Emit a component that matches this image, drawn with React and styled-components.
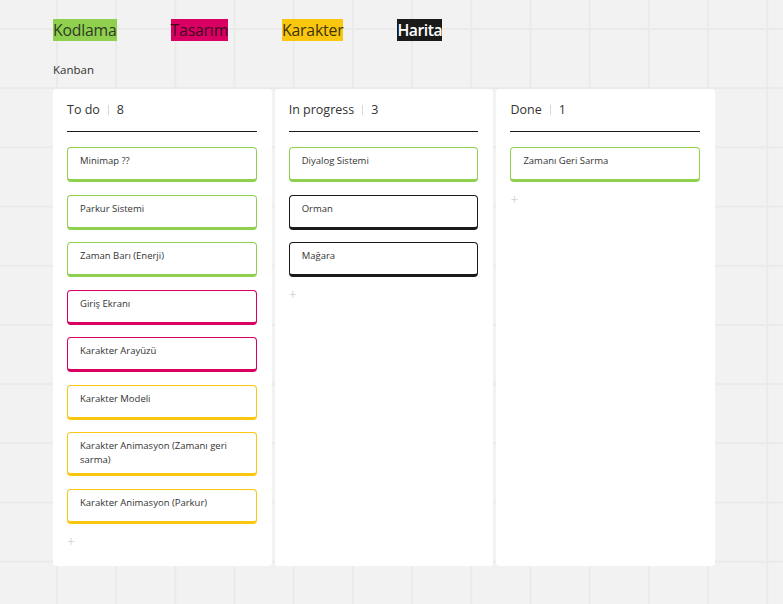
import React from 'react';
import styled, { createGlobalStyle } from 'styled-components';

const tags = [
	{ label: 'Kodlama', bg: '#8fd14f', fg: '#2f3a25' },
	{ label: 'Tasarım', bg: '#da0063', fg: '#3a0d20' },
	{ label: 'Karakter', bg: '#fac710', fg: '#3d3308' },
	{ label: 'Harita', bg: '#1a1a1a', fg: '#ffffff', bold: true },
];

const colors = {
	green: '#8fd14f',
	pink: '#da0063',
	yellow: '#fac710',
	black: '#1a1a1a',
};

const columns = [
	{
		title: 'To do',
		cards: [
			{ text: 'Minimap ??', color: 'green' },
			{ text: 'Parkur Sistemi', color: 'green' },
			{ text: 'Zaman Barı (Enerji)', color: 'green' },
			{ text: 'Giriş Ekranı', color: 'pink' },
			{ text: 'Karakter Arayüzü', color: 'pink' },
			{ text: 'Karakter Modeli', color: 'yellow' },
			{ text: 'Karakter Animasyon (Zamanı geri sarma)', color: 'yellow' },
			{ text: 'Karakter Animasyon (Parkur)', color: 'yellow' },
		],
	},
	{
		title: 'In progress',
		cards: [
			{ text: 'Diyalog Sistemi', color: 'green' },
			{ text: 'Orman', color: 'black' },
			{ text: 'Mağara', color: 'black' },
		],
	},
	{
		title: 'Done',
		cards: [{ text: 'Zamanı Geri Sarma', color: 'green' }],
	},
];

const App = () => {
	return (
		<>
			<GlobalStyle />
			<Page>
				<TagRow>
					{tags.map(tag => (
						<Tag key={tag.label} $bg={tag.bg} $fg={tag.fg} $bold={tag.bold}>
							{tag.label}
						</Tag>
					))}
				</TagRow>

				<BoardTitle>Kanban</BoardTitle>

				<Board>
					{columns.map(col => (
						<Column key={col.title}>
							<ColumnHeader>
								<span>{col.title}</span>
								<Divider />
								<span>{col.cards.length}</span>
							</ColumnHeader>

							<CardList>
								{col.cards.map(card => (
									<Card key={card.text} $color={colors[card.color]}>
										{card.text}
									</Card>
								))}
							</CardList>

							<AddButton>+</AddButton>
						</Column>
					))}
				</Board>
			</Page>
		</>
	);
};

export default App;

const GlobalStyle = createGlobalStyle`
	html, body {
		margin: 0;
		padding: 0;
	}
	body {
		min-height: 604px;
		background-color: #f2f2f2;
		background-image:
			linear-gradient(to right, #eaeaea 2px, transparent 2px),
			linear-gradient(to bottom, #eaeaea 2px, transparent 2px);
		background-size: 59.2px 59.2px;
		background-position: 56px 28px;
		font-family: 'Open Sans', 'Noto Sans', sans-serif;
		color: #333;
	}
`;

const Page = styled.div`
	padding: 19px 0 0 53px;
`;

const TagRow = styled.div`
	display: flex;
	gap: 54px;
`;

const Tag = styled.div`
	height: 22px;
	line-height: 22px;
	font-size: 15.8px;
	letter-spacing: ${p => (p.$bold ? '-0.5px' : '-0.2px')};
	font-weight: ${p => (p.$bold ? 600 : 400)};
	background: ${p => p.$bg};
	color: ${p => p.$fg};
`;

const BoardTitle = styled.div`
	margin-top: 21px;
	font-size: 11.5px;
	line-height: 16px;
	color: #333;
`;

const Board = styled.div`
	display: flex;
	gap: 3px;
	margin-top: 11px;
`;

const Column = styled.div`
	width: 218.7px;
	height: 477px;
	box-sizing: border-box;
	background: #fff;
	border-radius: 4px;
	padding: 12px 15px 0 14px;
`;

const ColumnHeader = styled.div`
	display: flex;
	align-items: center;
	font-size: 12.5px;
	line-height: 18px;
	color: #333;
	padding-bottom: 12px;
	border-bottom: 1.5px solid #1a1a1a;
`;

const Divider = styled.span`
	width: 1px;
	height: 10px;
	background: #d8d8d8;
	margin: 0 8px;
`;

const CardList = styled.div`
	display: flex;
	flex-direction: column;
	gap: 12.5px;
	margin-top: 15px;
`;

const Card = styled.div`
	box-sizing: border-box;
	min-height: 35px;
	padding: 6px 12px;
	border: 1px solid ${p => p.$color};
	border-right-width: 1.5px;
	border-bottom-width: 3px;
	border-radius: 4px;
	background: #fff;
	font-size: 9.5px;
	line-height: 14px;
	color: #333;
`;

const AddButton = styled.div`
	margin-top: 10px;
	font-size: 14px;
	line-height: 16px;
	color: #c4c4c4;
	font-weight: 300;
`;
